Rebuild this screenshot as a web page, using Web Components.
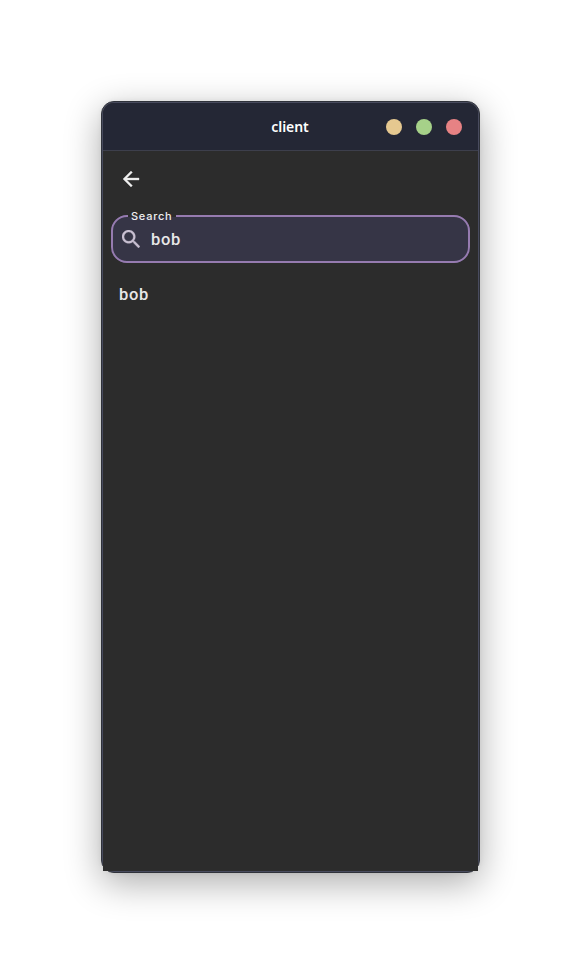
<!DOCTYPE html>
<html lang="en"><head><meta charset="utf-8"><title>client</title>
<style>html,body{margin:0;background:#fff}body{width:581px;height:974px;overflow:hidden}</style></head>
<body>
<app-window>
<title-bar slot="header">client</title-bar>
<back-button></back-button>
<search-field label="Search">bob</search-field>
<result-row>bob</result-row>
</app-window>
<script>
function define(name, html){
  customElements.define(name, class extends HTMLElement{
    constructor(){
      super();
      this.attachShadow({mode:"open"}).innerHTML = html;
      const label = this.shadowRoot.querySelector(".label");
      if(label) label.textContent = this.getAttribute("label");
    }
  });
}
define("app-window", `<style>
:host{display:block;box-sizing:border-box;padding:101px;height:974px}
.frame{box-sizing:border-box;width:379px;height:772px;border:1px solid #2f323a;border-radius:13px;background:#484b5e;padding:1px;box-shadow:0 10px 36px rgba(0,0,0,.33),0 0 5px rgba(0,0,0,.06)}
.inner{height:768px;background:#2c2c2c;border-radius:11px 11px 0 0;display:flex;flex-direction:column;width:375px;overflow:hidden}
</style><div class="frame"><div class="inner"><slot name="header"></slot><slot></slot></div></div>`);
define("title-bar", `<style>
:host{display:grid;grid-template-columns:1fr auto 1fr;align-items:center;height:47px;background:#242735;border-bottom:1px solid #3d3f4c;color:#fff;font:600 14px "Noto Sans",sans-serif;flex:none}
.title{grid-column:2;padding-right:1px;letter-spacing:-.05px}
.dots{display:flex;gap:14px;justify-content:flex-end;padding-right:16px}
i{width:16px;height:16px;border-radius:50%;background:#e5c890}
i:nth-child(2){background:#a6d189}i:nth-child(3){background:#e78284}
</style><span class="title"><slot></slot></span><div class="dots"><i></i><i></i><i></i></div>`);
define("back-button", `<style>
:host{display:flex;height:24px;padding:16px 16px 24px;flex:none}
</style><svg width="24" height="24" viewBox="0 0 24 24" fill="#eee" stroke="#eee" stroke-width=".35"><path d="M20 11H7.8l5.6-5.6L12 4l-8 8 8 8 1.4-1.4L7.8 13H20z"/></svg>`);
define("search-field", `<style>
:host{display:block;margin:0 8px;flex:none}
fieldset{box-sizing:border-box;position:relative;height:48px;margin:0;padding:0 9px;border:2px solid #967bb0;border-radius:16px;background:#363546;display:flex;align-items:center;gap:11px}
.label{position:absolute;z-index:1;left:15px;top:-8px;padding:0 4px 0 3px;height:14px;font:550 11px/15px Inter,sans-serif;letter-spacing:.75px;color:#eee}
.label::before{content:"";position:absolute;z-index:-1;left:0;right:0;top:6px;height:2px;background:#2c2c2c}
svg{flex:none}
.value{font:500 16.5px/24px Roboto,sans-serif;letter-spacing:.7px;color:#e8e8e8;padding-top:1px}
</style><fieldset><span class="label"></span><svg width="18" height="18" viewBox="3 3 17.5 17.5" fill="#c9c0d2" stroke="#c9c0d2" stroke-width=".3"><path d="M15.5 14h-.8l-.3-.3A6.5 6.5 0 1 0 13.7 14.4l.3.3v.8l5 5 1.5-1.5-5-5zm-6 0a4.5 4.5 0 1 1 0-9 4.5 4.5 0 0 1 0 9z"/></svg><span class="value"><slot></slot></span></fieldset>`);
define("result-row", `<style>
:host{display:block;padding:20px 16px 19px;font:500 16.5px/24px Roboto,sans-serif;letter-spacing:.7px;color:#e8e8e8}
</style><slot></slot>`);
</script>
</body></html>
